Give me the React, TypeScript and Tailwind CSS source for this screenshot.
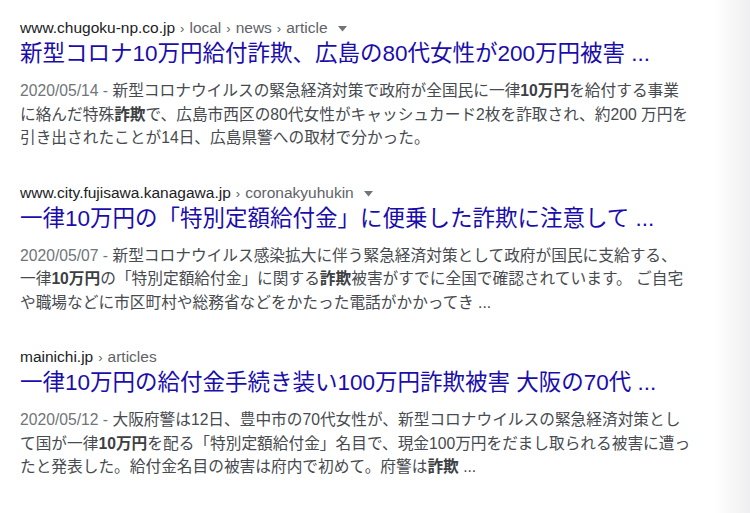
import React from 'react';

type Part = { t: string; b?: boolean };

type Result = {
  domain: string;
  crumbs: string[];
  arrow: boolean;
  title: string;
  date: string;
  lines: Part[][];
};

const results: Result[] = [
  {
    domain: 'www.chugoku-np.co.jp',
    crumbs: ['local', 'news', 'article'],
    arrow: true,
    title: '新型コロナ10万円給付詐欺、広島の80代女性が200万円被害 ...',
    date: '2020/05/14',
    lines: [
      [{ t: '新型コロナウイルスの緊急経済対策で政府が全国民に一律' }, { t: '10万円', b: true }, { t: 'を給付する事業' }],
      [{ t: 'に絡んだ特殊' }, { t: '詐欺', b: true }, { t: 'で、広島市西区の80代女性がキャッシュカード2枚を詐取され、約200 万円を' }],
      [{ t: '引き出されたことが14日、広島県警への取材で分かった。' }],
    ],
  },
  {
    domain: 'www.city.fujisawa.kanagawa.jp',
    crumbs: ['coronakyuhukin'],
    arrow: true,
    title: '一律10万円の「特別定額給付金」に便乗した詐欺に注意して ...',
    date: '2020/05/07',
    lines: [
      [{ t: '新型コロナウイルス感染拡大に伴う緊急経済対策として政府が国民に支給する、' }],
      [{ t: '一律' }, { t: '10万円', b: true }, { t: 'の「特別定額給付金」に関する' }, { t: '詐欺', b: true }, { t: '被害がすでに全国で確認されています。 ご自宅' }],
      [{ t: 'や職場などに市区町村や総務省などをかたった電話がかかってき ...' }],
    ],
  },
  {
    domain: 'mainichi.jp',
    crumbs: ['articles'],
    arrow: false,
    title: '一律10万円の給付金手続き装い100万円詐欺被害 大阪の70代 ...',
    date: '2020/05/12',
    lines: [
      [{ t: '大阪府警は12日、豊中市の70代女性が、新型コロナウイルスの緊急経済対策とし' }],
      [{ t: 'て国が一律' }, { t: '10万円', b: true }, { t: 'を配る「特別定額給付金」名目で、現金100万円をだまし取られる被害に遭っ' }],
      [{ t: 'たと発表した。給付金名目の被害は府内で初めて。府警は' }, { t: '詐欺', b: true }, { t: ' ...' }],
    ],
  },
];

const font = { fontFamily: '"Liberation Sans", Arial, "Noto Sans CJK JP", sans-serif' };

const SearchResult: React.FC<{ r: Result }> = ({ r }) => (
  <div className="flex flex-col">
    <div className="flex items-center h-[22px] text-[15.5px] whitespace-nowrap">
      <span className="text-[#202124]">{r.domain}</span>
      {r.crumbs.map((c) => (
        <span key={c} className="text-[#5f6368]">
          <span className="mx-[5px] text-[13px]">›</span>
          {c}
        </span>
      ))}
      {r.arrow && (
        <svg width="9" height="6" viewBox="0 0 9 6" className="ml-[10px] mt-[2px]">
          <path d="M0 0 L9 0 L4.5 5.5 Z" fill="#70757a" />
        </svg>
      )}
    </div>
    <div className="h-[30px] leading-[30px] text-[22.5px] text-[#1a0dab] whitespace-nowrap">{r.title}</div>
    <div className="mt-[10px] text-[15.7px] leading-[23.5px] text-[#474a4f] whitespace-nowrap">
      {r.lines.map((line, i) => (
        <div key={i}>
          {i === 0 && <span className="text-[#70757a]">{r.date} - </span>}
          {line.map((p, j) =>
            p.b ? (
              <b key={j} className="font-bold text-[#3c4043]">{p.t}</b>
            ) : (
              <span key={j}>{p.t}</span>
            )
          )}
        </div>
      ))}
    </div>
  </div>
);

export default function App() {
  return (
    <div className="flex w-[750px] h-[513px] bg-white overflow-hidden" style={font}>
      <div className="flex-1 flex flex-col gap-[32px] pl-[20px] pt-[17px]">
        {results.map((r) => (
          <SearchResult key={r.domain} r={r} />
        ))}
      </div>
      <div className="w-[36px] bg-gradient-to-r from-white to-[#efeff1]" />
    </div>
  );
}
